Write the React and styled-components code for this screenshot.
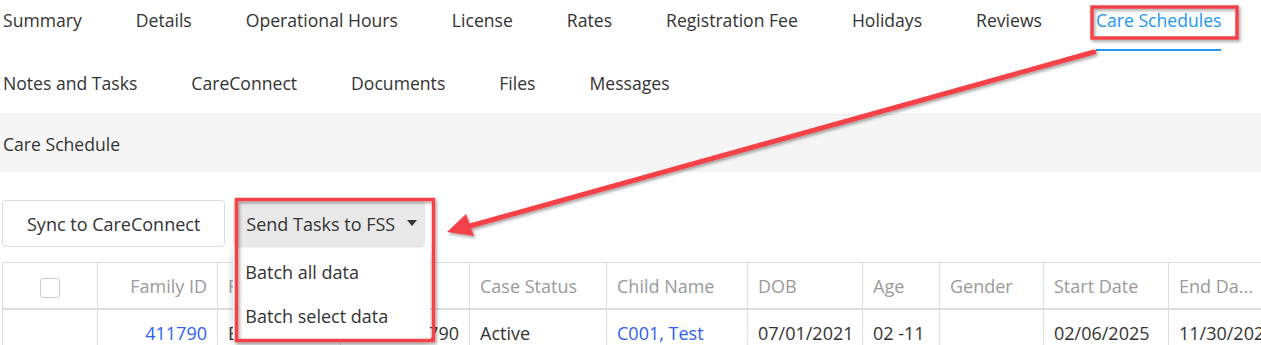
import styled, { createGlobalStyle } from "styled-components"

const GlobalStyle = createGlobalStyle`
  html, body {
    margin: 0;
    background: #fff;
  }
  body {
    font-family: "Open Sans", "Noto Sans", sans-serif;
    color: #333;
  }
`

const Page = styled.div`
  position: relative;
  width: 1261px;
  height: 345px;
  overflow: hidden;
`

const TabRow = styled.nav`
  display: flex;
  gap: 54px;
  padding-left: 3px;
  margin-bottom: ${(p) => (p.$last ? 0 : 12)}px;
`

const Tab = styled.div`
  box-sizing: border-box;
  height: 51px;
  padding-top: 6px;
  line-height: 28px;
  font-size: 17.6px;
  white-space: nowrap;
  color: ${(p) => (p.$active ? "#2196f3" : "#333")};
  border-bottom: 2px solid ${(p) => (p.$active ? "#2196f3" : "transparent")};
  cursor: pointer;
`

const SectionBar = styled.div`
  box-sizing: border-box;
  height: 58px;
  display: flex;
  align-items: center;
  padding-left: 3px;
  background: #f5f5f5;
  border-top: 1px solid #ebebeb;
  font-size: 17.6px;
`

const Toolbar = styled.div`
  display: flex;
  gap: 8px;
  margin-top: 28px;
  padding-left: 2px;
`

const Button = styled.button`
  box-sizing: border-box;
  height: 47px;
  padding: ${(p) => (p.$menu ? "0 7px 0 12px" : "0 24px")};
  display: flex;
  align-items: center;
  gap: 12px;
  font-family: inherit;
  font-size: 18px;
  color: #333;
  background: ${(p) => (p.$menu ? "#e9e9e9" : "#fff")};
  border: 1px solid ${(p) => (p.$menu ? "#e9e9e9" : "#dcdcdc")};
  border-radius: 4px;
  cursor: pointer;
`

const Caret = styled.span`
  width: 0;
  height: 0;
  border-left: 5px solid transparent;
  border-right: 5px solid transparent;
  border-top: 6px solid #333;
  margin-top: -2px;
`

const MenuWrap = styled.div`
  position: relative;
`

const Menu = styled.ul`
  position: absolute;
  top: calc(100% + 1px);
  left: 0;
  z-index: 5;
  width: 197px;
  margin: 0;
  padding: 2px 0;
  list-style: none;
  background: #fff;
  box-shadow: 0 3px 8px rgba(0, 0, 0, 0.18);
  border-radius: 2px;
`

const MenuItem = styled.li`
  height: 44px;
  line-height: 44px;
  padding-left: 12px;
  font-size: 18px;
  color: #333;
  white-space: nowrap;
`

const Table = styled.table`
  margin: 15px 0 0 2px;
  border-collapse: collapse;
  table-layout: fixed;
  width: 1290px;
  font-size: 18px;
`

const HeadCell = styled.th`
  height: 45px;
  padding: 0 10px;
  border: 1px solid #dddddd;
  border-bottom: 2px solid #dddddd;
  font-weight: 400;
  color: #9a9a9a;
  text-align: ${(p) => p.$align || "left"};
  white-space: nowrap;
  overflow: hidden;
`

const Cell = styled.td`
  height: 46px;
  padding: 0 10px;
  border: 1px solid #dddddd;
  color: ${(p) => (p.$link ? "#2f5ff5" : "#333")};
  text-align: ${(p) => p.$align || "left"};
  white-space: nowrap;
  overflow: hidden;
`

const Checkbox = styled.span`
  display: inline-block;
  width: 20px;
  height: 20px;
  box-sizing: border-box;
  border: 1px solid #cfcfcf;
  border-radius: 3px;
  vertical-align: middle;
`

const Annotations = styled.svg`
  position: absolute;
  left: 0;
  top: 0;
  z-index: 10;
  pointer-events: none;
`

const tabsTop = [
  "Summary",
  "Details",
  "Operational Hours",
  "License",
  "Rates",
  "Registration Fee",
  "Holidays",
  "Reviews",
  "Care Schedules",
]
const tabsBottom = ["Notes and Tasks", "CareConnect", "Documents", "Files", "Messages"]

const columns = [
  { w: 95, label: "", align: "center" },
  { w: 120, label: "Family ID", align: "right" },
  { w: 123, label: "Family Name" },
  { w: 129, label: "Case ID" },
  { w: 137, label: "Case Status" },
  { w: 141, label: "Child Name" },
  { w: 115, label: "DOB" },
  { w: 77, label: "Age" },
  { w: 104, label: "Gender" },
  { w: 125, label: "Start Date" },
  { w: 124, label: "End Da..." },
]

const row = [
  { v: "", align: "center" },
  { v: "411790", align: "right", link: true },
  { v: "Ezra, Test" },
  { v: "100790", align: "right" },
  { v: "Active" },
  { v: "C001, Test", link: true },
  { v: "07/01/2021" },
  { v: "02 -11" },
  { v: "" },
  { v: "02/06/2025" },
  { v: "11/30/2025" },
]

const App = () => {
  return (
    <Page>
      <GlobalStyle />
      <TabRow>
        {tabsTop.map((t) => (
          <Tab key={t} $active={t === "Care Schedules"}>
            {t}
          </Tab>
        ))}
      </TabRow>
      <TabRow $last>
        {tabsBottom.map((t) => (
          <Tab key={t}>{t}</Tab>
        ))}
      </TabRow>

      <SectionBar>Care Schedule</SectionBar>

      <Toolbar>
        <Button>Sync to CareConnect</Button>
        <MenuWrap>
          <Button $menu>
            Send Tasks to FSS
            <Caret />
          </Button>
          <Menu>
            <MenuItem>Batch all data</MenuItem>
            <MenuItem>Batch select data</MenuItem>
          </Menu>
        </MenuWrap>
      </Toolbar>

      <Table>
        <colgroup>
          {columns.map((c, i) => (
            <col key={i} style={{ width: c.w }} />
          ))}
        </colgroup>
        <thead>
          <tr>
            {columns.map((c, i) => (
              <HeadCell key={i} $align={c.align}>
                {i === 0 ? <Checkbox /> : c.label}
              </HeadCell>
            ))}
          </tr>
        </thead>
        <tbody>
          <tr>
            {row.map((c, i) => (
              <Cell key={i} $align={c.align} $link={c.link}>
                {c.v}
              </Cell>
            ))}
          </tr>
        </tbody>
      </Table>

      <Annotations width="1261" height="345" viewBox="0 0 1261 345">
        <defs>
          <filter id="shadow" x="-10%" y="-10%" width="120%" height="120%">
            <feDropShadow dx="1.5" dy="2" stdDeviation="1.5" floodColor="#000" floodOpacity="0.35" />
          </filter>
        </defs>
        <g filter="url(#shadow)" fill="none" stroke="#f5434a" strokeWidth="3.5">
          <rect x="1092" y="7" width="145" height="31" />
          <rect x="236.5" y="199.5" width="197" height="141" />
        </g>
        <g filter="url(#shadow)" fill="#f5434a">
          <path d="M1094 52 L470 226" stroke="#f5434a" strokeWidth="5" strokeLinecap="round" />
          <path d="M447 232 L466 214 L474 236 Z" />
        </g>
      </Annotations>
    </Page>
  )
}

export default App
